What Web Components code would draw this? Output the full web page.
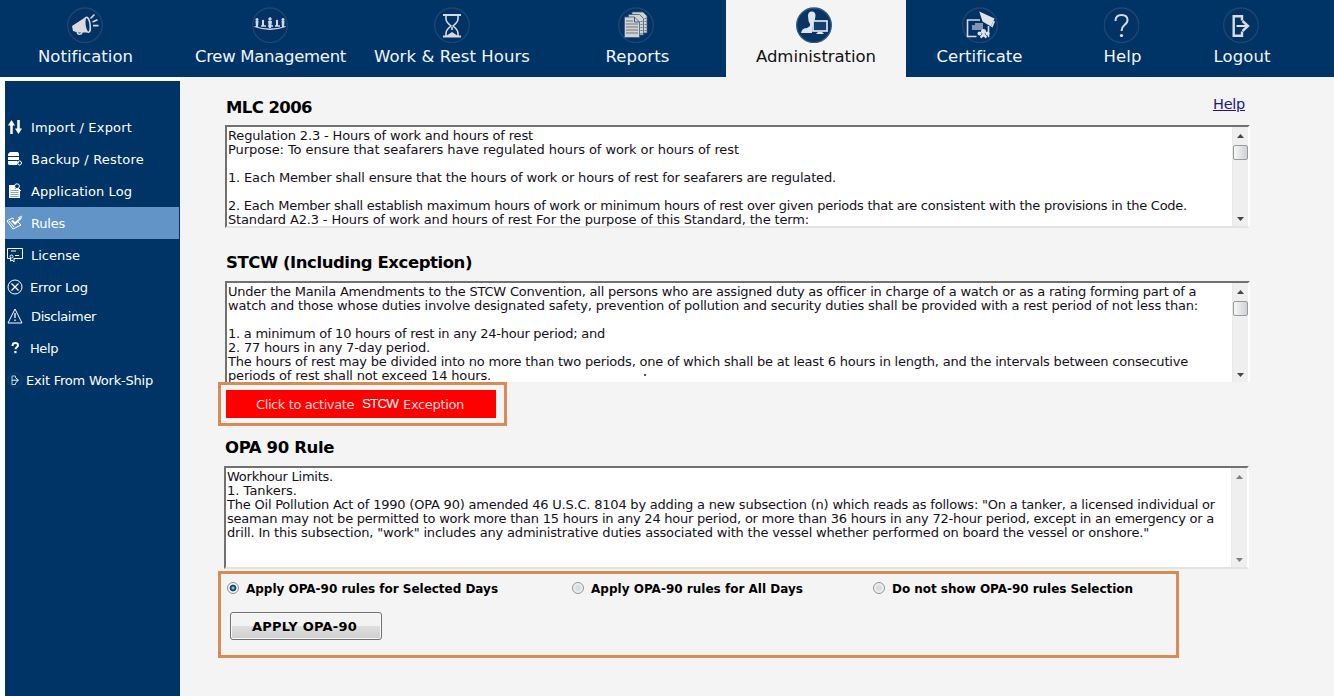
<!DOCTYPE html>
<html lang="en">
<head>
<meta charset="utf-8">
<title>Work-Ship - Rules</title>
<style>
html,body{margin:0;height:696px;overflow:hidden;background:#f4f4f4}
body{font-family:"DejaVu Sans",Verdana,sans-serif;color:#000}
</style>
</head>
<body>
<ship-app></ship-app>
<script>
const define = (name, markup, ready) => {
  const t = document.createElement('template');
  t.innerHTML = markup;
  customElements.define(name, class extends HTMLElement {
    constructor(){ super(); this.attachShadow({mode:'open'}).append(t.content.cloneNode(true)); }
    connectedCallback(){ if (ready) ready(this, this.shadowRoot); }
  });
};

const S = 'fill="none" stroke="#d5dbe6"';
const icons = {
  horn:`<path d="M5 19L18 10.500Q16 17 20.500 25.500L11 25.500 6 24z" fill="#d9dbe0"/><ellipse cx="20.500" cy="17.800" rx="2.600" ry="7.600" transform="rotate(-8 20.500 17.800)" fill="#036" stroke="#d9dbe0" stroke-width="1.500"/><path d="M10.500 24.500q-.5 2.500 1.500 2.800 3 .2 3-2.800" fill="none" stroke="#d9dbe0" stroke-width="1.600"/><path d="M23.500 11.500l4-4M25.500 15l5-2.300M26 18.600h5.500" ${S} stroke-width="1.600"/>`,
  crew:`<g fill="#d5dbe6"><circle cx="5" cy="12.500" r="1.500"/><path d="M3.500 14h3l-.5 6h-2z"/><circle cx="11" cy="14" r="1.200"/><path d="M10 15h2v4h-2z"/><circle cx="18" cy="12" r="1.700"/><path d="M16 14h4l-1 7h-2z"/><circle cx="25" cy="14" r="1.200"/><path d="M24 15h2v4h-2z"/><circle cx="31" cy="12.500" r="1.500"/><path d="M29.500 14h3l-.5 6h-2z"/></g><path d="M2.500 19.500q15.500 5.500 31 0M9 19h5M16 19h5M23 19h5" ${S} stroke-width="1.300"/>`,
  glass:`<path d="M9 8h18M9 29.500h18" ${S} stroke-width="2"/><path d="M12 9v3q0 3 5 7-5 4-5 7v3M24 9v3q0 3-5 7 5 4 5 7v3M18 20v3" ${S} stroke-width="1.600"/><path d="M12 29l6-4 6 4z" fill="#d5dbe6"/>`,
  reports:`<g fill="#d2d2d2" stroke="#365a86" stroke-width=".8"><path d="M14 5h11l4 4v17H14z"/><path d="M10.500 7.500h11l4 4V28h-15z"/><path d="M6.500 10h10l5 5v15.500h-15z"/></g><path d="M16.500 10v5h5" fill="none" stroke="#365a86"/><path d="M8 14h7M8 17h12M8 20h12M8 23h12M8 26h12" stroke="#6f7683" stroke-width="1"/><path d="M23.500 14v13M27.500 11v14" stroke="#737c8b" stroke-width="2" stroke-dasharray="1 2"/>`,
  admin:`<g fill="#dfe5ee"><path d="M12 9q0-4.500 3.800-4.500T19.500 9l-1.500 8v3h-4v-3q-2-3-2-8z"/><path d="M5 26q1-5 6-5l3-2h2v7z"/></g><rect x="17" y="14" width="14" height="10" fill="#16406f" stroke="#dfe5ee" stroke-width="1.700"/><path d="M22 25h4l2 2h-8z" fill="#dfe5ee"/>`,
  cert:`<path d="M18 13H5.500v16.500h9M26.500 19v10.500H26" ${S} stroke-width="1.600"/><path d="M13 16h8v7H10v-5h3z" fill="#7f95b3"/><path d="M17.300 4.500L32.500 11.500 29 19.500 20.500 14.500z" fill="#dfe3ea"/><path d="M33 14.500l-2.500 6-1.500-.7 2.500-6z" fill="#dfe3ea"/><g fill="#dfe3ea"><circle cx="21.500" cy="24.500" r="2.500"/><circle cx="17.500" cy="26.500" r="2"/><circle cx="25.500" cy="26.500" r="2"/><path d="M18 29.500l3.500-4 3.500 4-1 2-2.500-2-2.500 2z"/></g>`,
  ask:`<path d="M12 14q0-6 6-6t6 5q0 3-3.500 5.500-2.500 2-2.500 5.500" ${S} stroke-width="2"/><circle cx="18" cy="28.500" r="1.600" fill="#dfe5ee"/>`,
  out:`<path d="M19 13.500V9.200H10.700v19.600H19v-4.300" fill="none" stroke="#d9dbe0" stroke-width="2.400"/><path d="M13.500 19H24" stroke="#e3dfd8" stroke-width="2"/><path d="M19.500 14l5.500 5-5.500 5" fill="none" stroke="#d9dbe0" stroke-width="2.400"/>`
};
const W='fill="none" stroke="#fff"';
const small = {
  swap:`<path d="M4.500 15V4M11.500 1v11" stroke="#fff" stroke-width="2.500"/><path d="M1 6.500L4.500 1 8 6.500zM8 9.500l3.500 5.500L15 9.500z" fill="#fff"/>`,
  db:`<path d="M3 1h8l1 2v2H1V3zM1 6h11v3H1zM1 10h9v4H2l-1-1z" fill="#fff"/><path d="M2 5.500h10M2 9.500h8" stroke="#036"/><circle cx="12.500" cy="12" r="2" fill="#036" stroke="#fff"/><path d="M9 10l3 2" stroke="#fff"/>`,
  log:`<path d="M2 2h6v4h5v9H2z" fill="#fff"/><path d="M3.500 7.500h8M3.500 9.500h8M3.500 11.500h8M3.500 13.500h8" stroke="#59799e" stroke-width=".7"/><circle cx="10" cy="3.200" r="2.400" fill="#036" stroke="#fff"/><path d="M11 5l3 3" stroke="#fff"/>`,
  rules:`<path d="M0 6l5-3 2 1M0 6l6 8 8-4-4-4M2 6l5 6" ${W}/><path d="M4 6l4 4 7-7-1-1-6 5-2-2z" fill="#fff"/><path d="M11 3l4-2" stroke="#fff"/>`,
  license:`<path d="M3 11.500H.500v-10h15v10H7M4 4h5M8 8.500h4" ${W}/><circle cx="4.500" cy="9.500" r="1.500" ${W}/><path d="M3.500 11v3l1.500-1 2 2v-4" ${W}/>`,
  error:`<circle cx="8" cy="8" r="7" ${W}/><path d="M4.500 4.500l7 7M11.500 4.500l-7 7" ${W} stroke-width="1.400"/>`,
  warn:`<path d="M8 1L15 15H1z" ${W}/><path d="M8 5v5M8 11.500V13" ${W} stroke-width="1.300"/>`,
  ask:`<path d="M5.500 6q0-3 2.700-3T11 5.300c0 2-2.500 2-2.500 4" ${W} stroke-width="2"/><path d="M7.300 11h2.200v2.200H7.300z" fill="#fff"/>`,
  exit:`<circle cx="8" cy="8" r="7" fill="none" stroke="#17436f"/><path d="M8.500 6V4H5v8.500h3.500v-2" fill="none" stroke="#c3cedd"/><path d="M5 8.200h6M9 6l2.500 2.200L9 10.500" fill="none" stroke="#fff"/>`
};

/* One unwrapped line of text, tracked so that it spans w pixels. */
define('fit-text','<style>:host{display:inline-block;white-space:pre;position:relative;top:var(--drop,1px);text-decoration:inherit}</style><slot></slot>',(el)=>{
  const n=[...el.textContent].length, w=+el.getAttribute('w')-1;
  el.style.letterSpacing='0px';
  const nat=el.getBoundingClientRect().width;
  el.style.letterSpacing=((w-nat)/n).toFixed(4)+'px';
});

define('nav-tab',`<style>
:host{display:flex;flex-direction:column;align-items:center;height:77px;box-sizing:border-box;padding-top:7px;color:#f2f6fb;font-size:16.500px;line-height:20px}
:host([active]){background:#f4f4f4;color:#111}
svg{display:block;width:36px;height:36px;margin-bottom:3px;transform:translateX(var(--shift,0))}
</style><svg viewBox="0 0 36 36"></svg><slot></slot>`,(el,r)=>{
  const on=el.hasAttribute('active');
  r.querySelector('svg').innerHTML=`<circle cx="18" cy="18.300" r="17.300" fill="${on?'#0a3563':'#033264'}" stroke="${on?'#315a82':'#21466f'}" stroke-width="1.300"/>`+icons[el.getAttribute('icon')];
});

define('side-item',`<style>
:host{display:flex;align-items:center;height:32px;width:174px;box-sizing:border-box;padding-left:2px;color:#fff;font-size:13px;line-height:16px}
:host([active]){background:#6394c8}
svg{width:16px;height:16px;flex:none;margin-right:var(--gap,8px)}
</style><svg viewBox="0 0 16 16"></svg><slot></slot>`,(el,r)=>{ r.querySelector('svg').innerHTML=small[el.getAttribute('icon')]; });

define('rule-box',`<style>
:host{display:flex;box-sizing:border-box;background:#fff;border:2px solid;border-color:#717171 #fff #e3e3e3 #717171;overflow:hidden;font-size:13px;line-height:14px;color:#151019}
.text{flex:1;padding:1px 0 0 1px;display:flex;flex-direction:column;align-items:flex-start}
:host([cut]){border-bottom:0}
.bar{width:16px;background:#efefef;display:flex;flex-direction:column;align-items:center;box-sizing:border-box;border-left:1px solid #e9e9e9}
.thumb{width:13px;height:13px;border:1px solid #96999d;border-radius:2px;background:linear-gradient(90deg,#f7f7f7,#cfd1d5);margin-top:7px;flex:none}
.bar svg{width:7px;height:4px;flex:none;margin-top:7px}
.bar svg:last-child{margin-top:auto;margin-bottom:5px}
:host([idle]) .thumb{display:none}
:host([idle]) svg{opacity:.65}
</style><div class="text"><slot></slot></div><div class="bar"><svg viewBox="0 0 7 4"><path d="M0 4L3.500 0 7 4z" fill="#444"/></svg><div class="thumb"></div><svg viewBox="0 0 7 4"><path d="M0 0L3.500 4 7 0z" fill="#444"/></svg></div>`);

define('opa-radio',`<style>
:host{display:flex;align-items:center;font-weight:bold;font-size:12px;line-height:16px}
i{width:10px;height:10px;border:1px solid #8d9197;border-radius:50%;background:radial-gradient(circle,#dadcdf 0 30%,#f8f8f8 75%);margin-right:7px;flex:none}
:host([checked]) i{background:radial-gradient(circle at 50% 50%,#6fc5ec 0 10%,#155080 28%,#123b5c 40%,#f4f4f4 54%)}
</style><i></i><slot></slot>`);

define('ship-app',`<style>
:host{display:block;width:1334px;height:696px;overflow:hidden}
header{display:grid;grid-template-columns:171px 199px 164px 192px 180px 147px 139px 100px;height:77px;background:#036}
.body{display:flex;height:619px}
aside{width:175px;height:615px;border:solid #fff;border-width:4px 0 0 5px;background:#036}
nav{padding-top:30px}
main{flex:1;padding-left:38px;display:flex;flex-direction:column;align-items:flex-start}
h2{margin:0;font-size:16.500px;line-height:20px;padding-left:8px}
.top{display:flex;justify-content:space-between;width:1027px;margin-top:20px;height:28px}
.top a{color:#22187c;font-size:14.500px;line-height:18px;margin-top:-3px;text-decoration:underline}
rule-box{margin-left:7px;width:1025px;height:103px}
.orange{border:3px solid #d68c52;box-sizing:border-box}
.act{width:289px;height:44px;padding:5px}
.act button{font:13px/16px "DejaVu Sans",Verdana,sans-serif;border:0;padding:0 0 0 30px;display:flex;align-items:center;width:270px;height:28px;background:#f00;color:#ffd6d6}
.act b{font:13.500px "Liberation Sans",sans-serif;color:#fff;margin:0 5px 0 8px;--drop:-1px}
.opa{width:961px;height:87px;margin-top:2px;padding:6px 0 0 6px}
.radios{display:grid;grid-template-columns:345px 301px 1fr;height:16px}
.apply{font:bold 13px/16px "DejaVu Sans",Verdana,sans-serif;margin:16px 0 0 3px;width:152px;height:28px;border:1px solid #707070;border-radius:3px;background:linear-gradient(#f3f3f3 0 48%,#dedede 52%,#cfcfcf);box-shadow:inset 0 0 0 1px #fafafa;padding:0 0 0 21px;text-align:left;color:#000;display:block}
.dot{position:absolute;left:417px;top:91px;width:2px;height:2px;background:#555}
</style>
<header>
<nav-tab icon="horn" style="--shift:-1px"><fit-text w="96">Notification</fit-text></nav-tab>
<nav-tab icon="crew" style="--shift:-1px"><fit-text w="152">Crew Management</fit-text></nav-tab>
<nav-tab icon="glass"><fit-text w="157">Work &amp; Rest Hours</fit-text></nav-tab>
<nav-tab icon="reports" style="padding-left:15px;--shift:-2px"><fit-text w="65">Reports</fit-text></nav-tab>
<nav-tab icon="admin" active style="--shift:-2px"><fit-text w="121">Administration</fit-text></nav-tab>
<nav-tab icon="cert"><fit-text w="87">Certificate</fit-text></nav-tab>
<nav-tab icon="ask" style="--shift:-1.5px"><fit-text w="39">Help</fit-text></nav-tab>
<nav-tab icon="out" style="--shift:-1px"><fit-text w="58">Logout</fit-text></nav-tab>
</header>
<div class="body">
<aside><nav>
<side-item icon="swap"><fit-text w="102">Import / Export</fit-text></side-item>
<side-item icon="db"><fit-text w="114">Backup / Restore</fit-text></side-item>
<side-item icon="log"><fit-text w="102">Application Log</fit-text></side-item>
<side-item icon="rules" active><fit-text w="35">Rules</fit-text></side-item>
<side-item icon="license"><fit-text w="50">License</fit-text></side-item>
<side-item icon="error" style="--gap:7px"><fit-text w="59">Error Log</fit-text></side-item>
<side-item icon="warn" style="margin-top:-3px"><fit-text w="66">Disclaimer</fit-text></side-item>
<side-item icon="ask" style="--gap:7px"><fit-text w="29">Help</fit-text></side-item>
<side-item icon="exit" style="--gap:3px"><fit-text w="128">Exit From Work-Ship</fit-text></side-item>
</nav></aside>
<main>
<div class="top"><h2><fit-text w="87">MLC 2006</fit-text></h2><a><fit-text w="33">Help</fit-text></a></div>
<rule-box><fit-text w="306">Regulation 2.3 - Hours of work and hours of rest</fit-text><fit-text w="512">Purpose: To ensure that seafarers have regulated hours of work or hours of rest</fit-text><br><fit-text w="609">1. Each Member shall ensure that the hours of work or hours of rest for seafarers are regulated.</fit-text><br><fit-text w="960">2. Each Member shall establish maximum hours of work or minimum hours of rest over given periods that are consistent with the provisions in the Code.</fit-text><fit-text w="582">Standard A2.3 - Hours of work and hours of rest For the purpose of this Standard, the term:</fit-text></rule-box>
<h2 style="margin:24px 0 9px"><fit-text w="247">STCW (Including Exception)</fit-text></h2>
<rule-box cut style="height:101px;position:relative"><fit-text w="969">Under the Manila Amendments to the STCW Convention, all persons who are assigned duty as officer in charge of a watch or as a rating forming part of a</fit-text><fit-text w="971">watch and those whose duties involve designated safety, prevention of pollution and security duties shall be provided with a rest period of not less than:</fit-text><br><fit-text w="378">1. a minimum of 10 hours of rest in any 24-hour period; and</fit-text><fit-text w="203">2. 77 hours in any 7-day period.</fit-text><fit-text w="961">The hours of rest may be divided into no more than two periods, one of which shall be at least 6 hours in length, and the intervals between consecutive</fit-text><fit-text w="264">periods of rest shall not exceed 14 hours.</fit-text><span class="dot"></span></rule-box>
<div class="orange act"><button><fit-text w="99">Click to activate</fit-text><b><fit-text w="37">STCW</fit-text></b><fit-text w="62">Exception</fit-text></button></div>
<h2 style="margin:11px 0 9px;padding-left:7px"><fit-text w="110">OPA 90 Rule</fit-text></h2>
<rule-box idle style="margin-left:6px"><fit-text w="107">Workhour Limits.</fit-text><fit-text w="71">1. Tankers.</fit-text><fit-text w="989">The Oil Pollution Act of 1990 (OPA 90) amended 46 U.S.C. 8104 by adding a new subsection (n) which reads as follows: "On a tanker, a licensed individual or</fit-text><fit-text w="988">seaman may not be permitted to work more than 15 hours in any 24 hour period, or more than 36 hours in any 72-hour period, except in an emergency or a</fit-text><fit-text w="923">drill. In this subsection, "work" includes any administrative duties associated with the vessel whether performed on board the vessel or onshore."</fit-text></rule-box>
<div class="orange opa"><div class="radios">
<opa-radio checked><fit-text w="253">Apply OPA-90 rules for Selected Days</fit-text></opa-radio>
<opa-radio><fit-text w="213">Apply OPA-90 rules for All Days</fit-text></opa-radio>
<opa-radio><fit-text w="242">Do not show OPA-90 rules Selection</fit-text></opa-radio></div>
<button class="apply"><fit-text w="106">APPLY OPA-90</fit-text></button></div>
</main>
</div>`);
</script>
</body>
</html>
